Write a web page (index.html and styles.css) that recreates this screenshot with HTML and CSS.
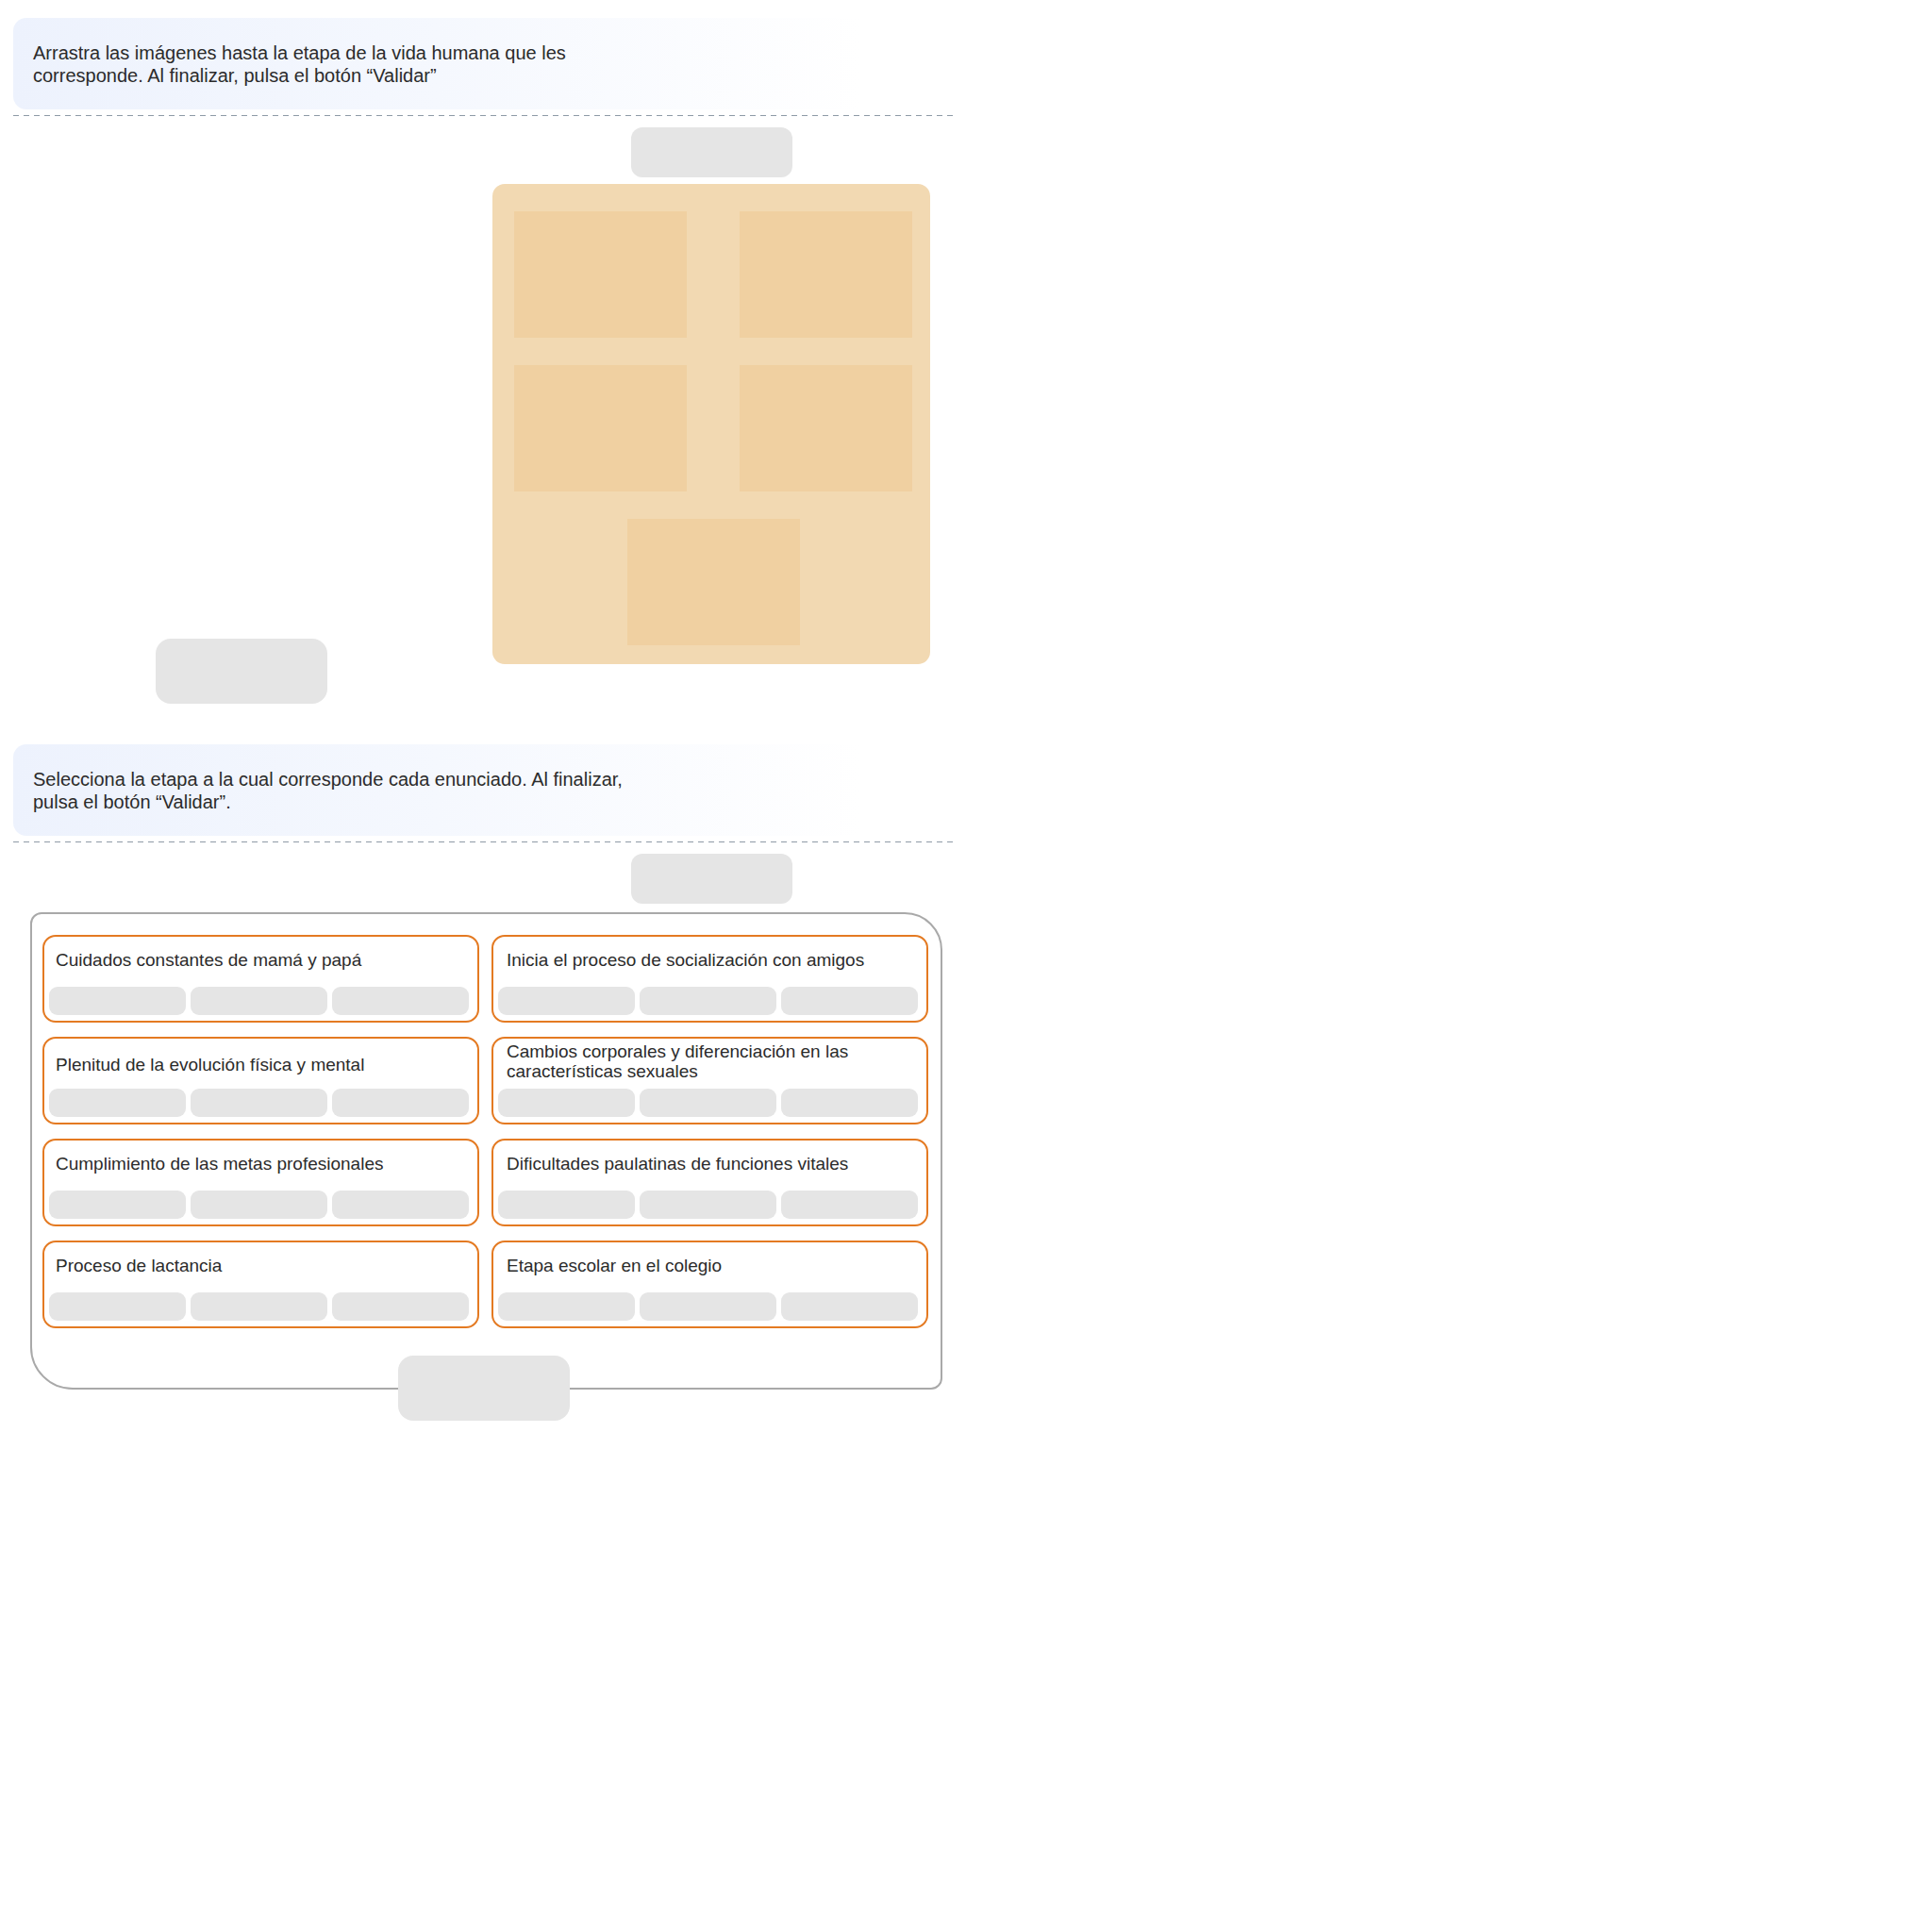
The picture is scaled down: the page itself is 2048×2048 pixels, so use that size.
FILE: index.html
```html
<!DOCTYPE html>
<html lang="es">
<head>
<meta charset="utf-8">
<title>Etapas de la vida humana</title>
<link rel="stylesheet" href="styles.css">
</head>
<body>
<main class="page">
  <section class="activity">
    <div class="prompt"><p>Arrastra las imágenes hasta la etapa de la vida humana que les corresponde. Al finalizar, pulsa el botón “Validar”</p></div>
    <div class="rule"></div>
    <div class="drag-area">
      <div class="bank"><div class="btn btn-lg"></div></div>
      <div class="board-col">
        <div class="btn btn-sm"></div>
        <div class="board">
          <div class="tile"></div>
          <div class="tile"></div>
          <div class="tile"></div>
          <div class="tile"></div>
          <div class="tile tile-last"></div>
        </div>
      </div>
    </div>
  </section>

  <section class="activity second">
    <div class="prompt"><p>Selecciona la etapa a la cual corresponde cada enunciado. Al finalizar, pulsa el botón “Validar”.</p></div>
    <div class="rule"></div>
    <div class="toolbar"><div class="btn btn-sm"></div></div>
    <div class="quiz">
      <div class="card"><div class="stmt">Cuidados constantes de mamá y papá</div><div class="slots"><span></span><span></span><span></span></div></div>
      <div class="card"><div class="stmt">Inicia el proceso de socialización con amigos</div><div class="slots"><span></span><span></span><span></span></div></div>
      <div class="card"><div class="stmt">Plenitud de la evolución física y mental</div><div class="slots"><span></span><span></span><span></span></div></div>
      <div class="card"><div class="stmt">Cambios corporales y diferenciación en las características sexuales</div><div class="slots"><span></span><span></span><span></span></div></div>
      <div class="card"><div class="stmt">Cumplimiento de las metas profesionales</div><div class="slots"><span></span><span></span><span></span></div></div>
      <div class="card"><div class="stmt">Dificultades paulatinas de funciones vitales</div><div class="slots"><span></span><span></span><span></span></div></div>
      <div class="card"><div class="stmt">Proceso de lactancia</div><div class="slots"><span></span><span></span><span></span></div></div>
      <div class="card"><div class="stmt">Etapa escolar en el colegio</div><div class="slots"><span></span><span></span><span></span></div></div>
    </div>
    <div class="btn btn-lg btn-center"></div>
  </section>
</main>
</body>
</html>
```

FILE: styles.css
```css
* { box-sizing: border-box; }

html, body {
  margin: 0;
  padding: 0;
  background: #ffffff;
}

body {
  font-family: "Liberation Sans", Arial, Helvetica, sans-serif;
  color: #2b2b2b;
}

.page {
  width: 998px;
  margin-left: 14px;
  padding-top: 19px;
}

.prompt {
  height: 97px;
  padding: 25px 0 0 21px;
  border-radius: 14px 0 0 14px;
  background: linear-gradient(90deg, #edf2fd 0%, #f5f8fe 45%, #ffffff 90%);
}

.prompt p {
  margin: 0;
  max-width: 640px;
  font-size: 20px;
  line-height: 24px;
}

.rule {
  margin-top: 6px;
  height: 1px;
  background: repeating-linear-gradient(90deg, #8e9aa6 0 6px, transparent 6px 11px);
}

.btn {
  background: #e5e5e5;
}

.btn-sm {
  width: 171px;
  height: 53px;
  border-radius: 12px;
}

.btn-lg {
  width: 182px;
  height: 69px;
  border-radius: 16px;
}

/* Activity 1 */
.drag-area {
  margin-top: 12px;
  display: grid;
  grid-template-columns: 484px 464px;
  column-gap: 24px;
  align-items: start;
}

.bank {
  display: flex;
  justify-content: center;
  padding-top: 542px;
}

.board-col {
  display: flex;
  flex-direction: column;
  align-items: center;
}

.board {
  margin-top: 7px;
  width: 464px;
  height: 509px;
  border-radius: 13px;
  background: #f2d9b2;
  padding: 29px 18px 20px 23px;
  display: grid;
  grid-template-columns: 183px 183px;
  grid-auto-rows: 134px;
  column-gap: 56px;
  row-gap: 29px;
}

.tile {
  background: #f0d0a1;
}

.tile-last {
  grid-column: 1 / -1;
  width: 183px;
  justify-self: center;
}

/* Activity 2 */
.second {
  margin-top: 43px;
}

.toolbar {
  margin-top: 12px;
  margin-left: 508px;
  width: 464px;
  display: flex;
  justify-content: center;
}

.quiz {
  margin-top: 9px;
  margin-left: 18px;
  width: 967px;
  border: 2px solid #a9a9a9;
  border-radius: 12px 40px 12px 45px;
  padding: 22px 13px 63px 11px;
  display: grid;
  grid-template-columns: 463px 463px;
  column-gap: 13px;
  row-gap: 15px;
}

.card {
  height: 93px;
  border: 2px solid #e47a22;
  border-radius: 14px;
  padding: 3px 9px 7px 5px;
  display: flex;
  flex-direction: column;
}

.stmt {
  flex: 1;
  min-height: 42px;
  display: flex;
  align-items: center;
  padding-left: 7px;
  font-size: 19px;
  line-height: 21px;
}

.card:nth-child(even) .stmt {
  padding-left: 9px;
}

.card:nth-child(3) .stmt {
  padding-top: 6px;
}

.slots {
  margin-top: 8px;
  display: flex;
  gap: 5px;
}

.slots span {
  width: 145px;
  height: 30px;
  border-radius: 9px;
  background: #e5e5e5;
}

.btn-center {
  margin: -36px auto 0;
}
```
